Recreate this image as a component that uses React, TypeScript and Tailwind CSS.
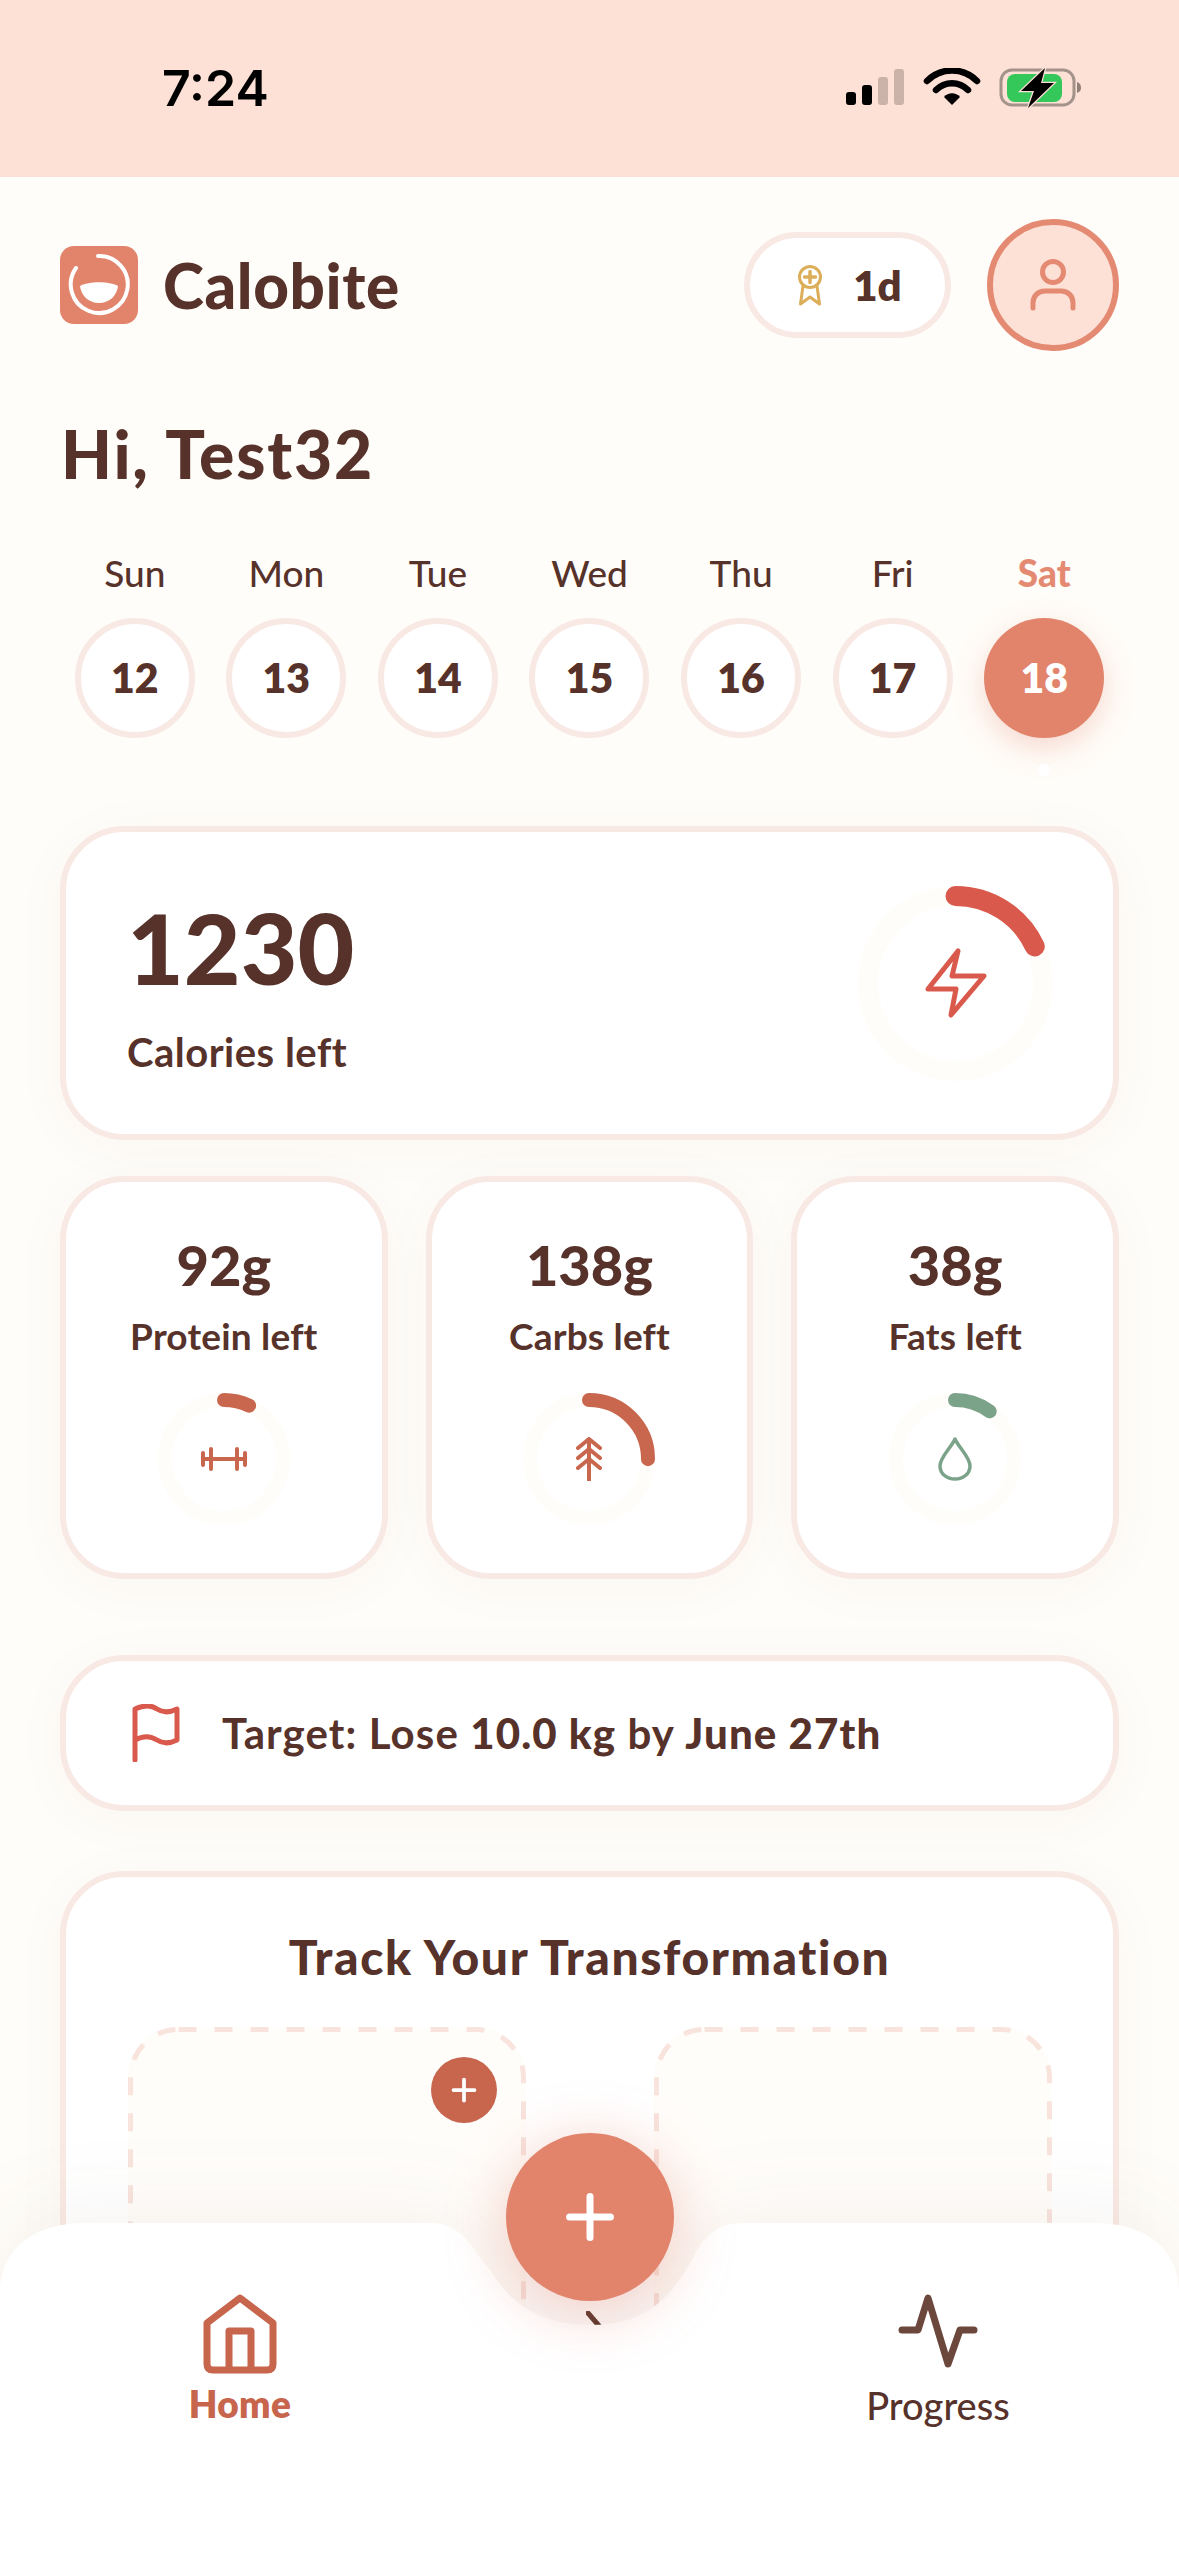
import { Plus } from 'lucide-react';

const days = [
  ['Sun', 12],
  ['Mon', 13],
  ['Tue', 14],
  ['Wed', 15],
  ['Thu', 16],
  ['Fri', 17],
  ['Sat', 18],
] as const;

function Ring({ size, stroke, frac, color, children }: { size: number; stroke: number; frac: number; color: string; children: React.ReactNode }) {
  const r = (size - stroke) / 2;
  const c = 2 * Math.PI * r;
  return (
    <div className="relative shrink-0" style={{ width: size, height: size }}>
      <svg width={size} height={size} className="-rotate-90">
        <circle cx={size / 2} cy={size / 2} r={r} fill="none" stroke="#fffdf9" strokeWidth={stroke} />
        <circle cx={size / 2} cy={size / 2} r={r} fill="none" stroke={color} strokeWidth={stroke} strokeLinecap="round" strokeDasharray={`${c * frac} ${c}`} />
      </svg>
      <div className="absolute inset-0 flex items-center justify-center">{children}</div>
    </div>
  );
}

function StatusIcons() {
  return (
    <svg width="236" height="42" viewBox="0 0 236 42">
      <rect x="0" y="24" width="10" height="13" rx="3" fill="#000" />
      <rect x="16" y="17" width="10" height="20" rx="3" fill="#000" />
      <rect x="32" y="9" width="10" height="28" rx="3" fill="#cbb3a9" />
      <rect x="48" y="1" width="10" height="36" rx="3" fill="#cbb3a9" />
      <path d="M81 13 C95 -1 117 -1 131 13" fill="none" stroke="#000" strokeWidth="6.5" strokeLinecap="round" />
      <path d="M90 22 C99 13 113 13 122 22" fill="none" stroke="#000" strokeWidth="6.5" strokeLinecap="round" />
      <path d="M98 29 C102 24 110 24 114 29 L106 37 Z" fill="#000" />
      <rect x="155" y="2" width="73" height="35" rx="11" fill="none" stroke="#a3938a" strokeWidth="3" />
      <rect x="161" y="6" width="55" height="28" rx="8" fill="#34c759" />
      <path d="M231 14 C234 15 235 17 235 20 C235 22 234 24 231 25 Z" fill="#8f8178" />
      <path d="M199 0 L175 23 H188 L182 40 L208 15 H195 Z" fill="#000" stroke="#fde0d6" strokeWidth="2.5" paintOrder="stroke" />
    </svg>
  );
}

function Logo() {
  return (
    <svg width="78" height="78" viewBox="0 0 78 78" className="shrink-0">
      <rect width="78" height="78" rx="14" fill="#e2836c" />
      <path d="M16 22 A28.5 28.5 0 1 0 38 10" fill="none" stroke="#fff" strokeWidth="4" strokeLinecap="round" />
      <path d="M20 40 C29 35 49 35 58 40 C57 49 50 57 39 57 C28 57 21 49 20 40 Z" fill="#fff" />
    </svg>
  );
}

function Medal() {
  return (
    <svg width="26" height="42" viewBox="0 0 26 42" fill="none" stroke="#dcae5a" strokeWidth="3" strokeLinejoin="round" strokeLinecap="round">
      <circle cx="13" cy="13" r="10.5" />
      <path d="M13 7.5 V18.5 M7.5 13 H18.5" strokeWidth="3.5" />
      <path d="M6 22 L3.5 40 L13 33 L22.5 40 L20 22" />
    </svg>
  );
}

function UserIcon() {
  return (
    <svg width="46" height="52" viewBox="0 0 46 52" fill="none" stroke="#e58a72" strokeWidth="5" strokeLinecap="round">
      <circle cx="23" cy="13" r="10.5" />
      <path d="M3 49 V44 C3 37 8 32 15 32 H31 C38 32 43 37 43 44 V49" />
    </svg>
  );
}

function Dumbbell() {
  return (
    <svg width="46" height="24" viewBox="0 0 46 24" fill="none" stroke="#c9674e" strokeWidth="4" strokeLinecap="round">
      <path d="M2 6 V18 M44 6 V18 M10 2 V22 M36 2 V22 M2 12 H44" />
    </svg>
  );
}

function Tree() {
  return (
    <svg width="28" height="44" viewBox="0 0 28 44" fill="none" stroke="#c9674e" strokeWidth="4" strokeLinecap="round" strokeLinejoin="round">
      <path d="M14 2 V43 M3 11 L14 2 L25 11 M3 21 L14 12 L25 21 M3 31 L14 22 L25 31" />
    </svg>
  );
}

function Drop() {
  return (
    <svg width="34" height="44" viewBox="0 0 34 44" fill="none" stroke="#7ba38a" strokeWidth="3.5" strokeLinejoin="round">
      <path d="M17 2 C21 11 32 20 32 29 C32 37 25 42 17 42 C9 42 2 37 2 29 C2 20 13 11 17 2 Z" />
    </svg>
  );
}

function PhotoSlot({ children }: { children?: React.ReactNode }) {
  return (
    <div className="relative h-[420px] rounded-[50px] bg-[#fffdfa]">
      <svg width="398" height="420" viewBox="0 0 398 420" fill="none" className="absolute inset-0">
        <rect x="2.5" y="2.5" width="393" height="415" rx="48" stroke="#f8e3dd" strokeWidth="5" strokeDasharray="18 18" />
      </svg>
      {children}
    </div>
  );
}

const macros = [
  { value: '92g', label: 'Protein left', frac: 0.07, color: '#c9674e', icon: <Dumbbell /> },
  { value: '138g', label: 'Carbs left', frac: 0.25, color: '#c9674e', icon: <Tree /> },
  { value: '38g', label: 'Fats left', frac: 0.1, color: '#7ba38a', icon: <Drop /> },
];

const cardClass = 'rounded-[64px] border-[6px] border-[#f9e9e4] bg-white shadow-[0_8px_60px_rgba(90,50,40,0.03)]';

export default function App() {
  return (
    <div className="relative flex h-[2556px] w-[1179px] flex-col overflow-hidden bg-[#fffdf9] font-['Lato','Noto_Sans',sans-serif] text-[#56322a]">
      <div className="flex h-[177px] shrink-0 items-start justify-between bg-[#fde0d6] pl-[162px] pr-[97px] pt-[58px]">
        <span className="font-['Inter',sans-serif] text-[50px] leading-[60px] font-semibold text-black">7:24</span>
        <div className="pt-[10px]">
          <StatusIcons />
        </div>
      </div>

      <div className="flex items-center justify-between pl-[60px] pr-[60px] pt-[42px]">
        <div className="flex items-center gap-[25px]">
          <Logo />
          <span className="text-[62px] leading-[70px] font-black tracking-[0.6px]">Calobite</span>
        </div>
        <div className="flex items-center gap-[36px]">
          <div className="flex h-[106px] w-[207px] items-center justify-center gap-[30px] rounded-full border-[6px] border-[#f9e9e4] bg-white pl-[4px]">
            <Medal />
            <span className="text-[42px] font-extrabold">1d</span>
          </div>
          <div className="flex h-[132px] w-[132px] items-center justify-center rounded-full border-[6px] border-[#e58a72] bg-[#fde0d6]">
            <UserIcon />
          </div>
        </div>
      </div>

      <h1 className="mt-[65px] pl-[61px] text-[66px] leading-[76px] font-black tracking-[1.8px]">Hi, Test32</h1>

      <div className="mt-[59px] grid grid-cols-7 px-[59px]">
        {days.map(([name, num]) => {
          const active = num === 18;
          return (
            <div key={name} className="relative flex flex-col items-center gap-[23px]">
              <span className={active ? 'text-[37px] leading-[44px] font-black text-[#e58a72]' : 'text-[37px] leading-[44px] font-medium'}>{name}</span>
              <div
                className={
                  active
                    ? 'flex h-[120px] w-[120px] items-center justify-center rounded-full bg-[#e2836c] text-[41px] font-extrabold text-white shadow-[0_10px_30px_rgba(226,131,108,0.3)]'
                    : 'flex h-[120px] w-[120px] items-center justify-center rounded-full border-[6px] border-[#f9e9e4] bg-white text-[41px] font-extrabold'
                }
              >
                {num}
              </div>
              {active && <span className="absolute -bottom-[38px] h-[12px] w-[12px] rounded-full bg-white" />}
            </div>
          );
        })}
      </div>

      <div className="mt-[88px] flex flex-col gap-[36px] px-[60px]">
        <div className={`flex h-[314px] items-center justify-between pl-[61px] pr-[60px] ${cardClass}`}>
          <div>
            <div className="text-[98px] leading-[110px] font-black">1230</div>
            <div className="mt-[27px] text-[40px] leading-[46px] font-bold tracking-[0.5px]">Calories left</div>
          </div>
          <Ring size={195} stroke={20} frac={0.18} color="#d9594c">
            <svg width="62" height="70" viewBox="0 0 62 70" fill="none" stroke="#d9594c" strokeWidth="5" strokeLinejoin="round">
              <path d="M33 3 L27 28 H59 L26 67 L31 41 H3 Z" />
            </svg>
          </Ring>
        </div>

        <div className="grid grid-cols-3 gap-[38px]">
          {macros.map((m) => (
            <div key={m.label} className={`flex h-[403px] flex-col items-center pt-[53px] ${cardClass}`}>
              <div className="text-[56px] leading-[60px] font-black">{m.value}</div>
              <div className="mt-[19px] text-[37px] leading-[44px] font-bold tracking-[0.2px]">{m.label}</div>
              <div className="mt-[35px]">
                <Ring size={132} stroke={14} frac={m.frac} color={m.color}>
                  {m.icon}
                </Ring>
              </div>
            </div>
          ))}
        </div>
      </div>

      <div className="mt-[76px] flex flex-col gap-[60px] px-[60px]">
        <div className={`flex h-[156px] items-center gap-[42px] pl-[66px] ${cardClass}`}>
          <svg width="48" height="58" viewBox="0 0 48 58" fill="none" stroke="#d9594c" strokeWidth="5" strokeLinecap="round" strokeLinejoin="round" className="shrink-0">
            <path d="M3 56 V5 C14 0 21 2 25 5 C31 9 37 9 45 5 V36 C37 40 31 40 25 36 C19 32 12 31 3 36" />
          </svg>
          <p className="text-[42px] leading-[48px] font-bold tracking-[1.1px]">
            Target: Lose <span className="font-black">10.0 kg</span> by <span className="font-black">June 27th</span>
          </p>
        </div>

        <div className={`flex h-[700px] flex-col items-center px-[62px] pt-[52px] ${cardClass}`}>
          <h2 className="text-[48px] leading-[56px] font-black tracking-[1.6px]">Track Your Transformation</h2>
          <div className="mt-[42px] grid w-full grid-cols-2 gap-[128px]">
            <PhotoSlot>
              <div className="absolute right-[29px] top-[30px] flex h-[66px] w-[66px] items-center justify-center rounded-full bg-[#c7654d] text-white">
                <Plus size={36} strokeWidth={2.5} />
              </div>
              <svg width="20" height="18" viewBox="0 0 20 18" className="absolute left-[458px] top-[284px]">
                <path d="M2 2 L14 16" stroke="#56322a" strokeWidth="5" strokeLinecap="round" />
              </svg>
            </PhotoSlot>
            <PhotoSlot />
          </div>
        </div>
      </div>

      <nav className="absolute bottom-0 left-0 h-[333px] w-full">
        <svg width="1179" height="333" viewBox="0 0 1179 333" className="absolute inset-0 drop-shadow-[0_-16px_40px_rgba(90,50,40,0.05)]">
          <path d="M0 333 V70 C0 25 35 0 85 0 H430 C462 0 472 25 490 47 C510 80 540 102 590 102 C640 102 668 80 690 40 C705 12 715 0 745 0 H1095 C1145 0 1179 25 1179 70 V333 Z" fill="#fff" />
        </svg>
        <div className="absolute left-1/2 top-[-90px] flex h-[168px] w-[168px] -translate-x-1/2 items-center justify-center rounded-full bg-[#e2836c] text-white shadow-[0_10px_60px_rgba(226,131,108,0.4)]">
          <Plus size={70} strokeWidth={2.4} />
        </div>
        <div className="relative flex justify-between px-[140px] pt-[71px]">
          <div className="flex w-[200px] flex-col items-center gap-[13px]">
            <svg width="74" height="80" viewBox="0 0 74 80" fill="none" stroke="#c7654d" strokeWidth="7" strokeLinejoin="round">
              <path d="M37 4 L70 29 V70 C70 74 68 76 64 76 H10 C6 76 4 74 4 70 V29 Z" />
              <path d="M26 76 V37 H48 V76" />
            </svg>
            <span className="text-[37px] leading-[34px] font-extrabold tracking-[0.3px] text-[#c7654d]">Home</span>
          </div>
          <div className="flex w-[200px] -translate-x-[1px] flex-col items-center gap-[20px]">
            <svg width="80" height="74" viewBox="0 0 80 74" fill="none" stroke="#6b473c" strokeWidth="7" strokeLinejoin="round" strokeLinecap="round">
              <path d="M4 36 H20 L30 4 L50 70 L62 36 H76" />
            </svg>
            <span className="text-[38px] leading-[34px] font-medium">Progress</span>
          </div>
        </div>
      </nav>
    </div>
  );
}
